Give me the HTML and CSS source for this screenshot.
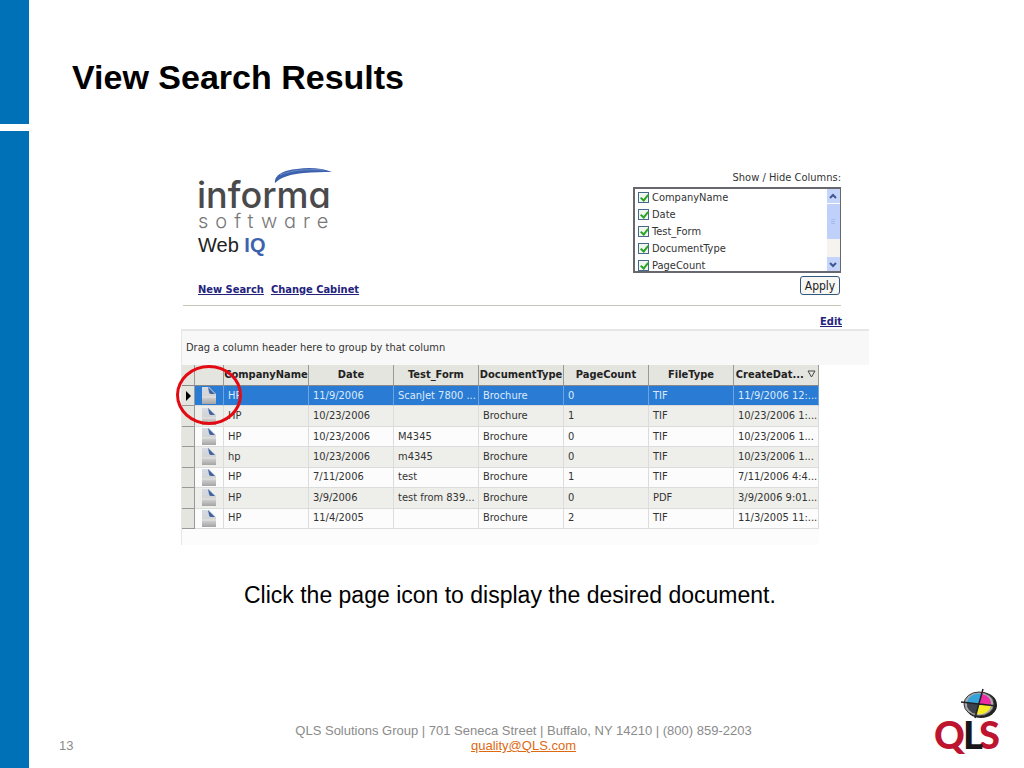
FILE: index.html
```html
<!DOCTYPE html>
<html lang="en">
<head>
<meta charset="utf-8">
<title>View Search Results</title>
<link rel="stylesheet" href="styles.css">
</head>
<body>
<svg class="defs" width="0" height="0" aria-hidden="true">
  <defs>
    <linearGradient id="paper" x1="0" y1="0" x2="0" y2="1">
      <stop offset="0" stop-color="#d5dbe4"/><stop offset=".6" stop-color="#d2d2d2"/><stop offset="1" stop-color="#a4a4a6"/>
    </linearGradient>
    <symbol id="page" viewBox="0 0 14 17">
      <path d="M0 0H7L14 7V17H0Z" fill="url(#paper)"/>
      <path d="M6 0L13 7H9Q7 7 7 5Z" fill="#41639f"/>
      <path d="M0 10H14" stroke="#e4e4e4"/>
    </symbol>
  </defs>
</svg>
<div class="slide">
  <div class="rail"><div class="rail-top"></div><div class="rail-rest"></div></div>
  <div class="content">
    <h1 class="title">View Search Results</h1>
    <main class="app">
      <div class="top">
        <div class="brand">
          <svg class="brand-logo" viewBox="0 0 150 92" role="img" aria-label="informa software Web IQ">
            <path d="M79 19C78 11 88 6 101 5C113 3 126 4 136 8C127 8 118 8 108 9C95 10 85 13 79 19Z" fill="#3d62ad"/>
            <path d="M84 11C96 6 109 5 128 6" fill="none" stroke="#6c8ac8" stroke-width="1"/>
            <text class="word-informa" x="1" y="44">informa</text>
            <text class="word-software" x="2" y="64">software</text>
            <text class="word-web" x="2" y="88">Web <tspan class="word-iq">IQ</tspan></text>
          </svg>
          <nav class="links"><a href="#">New Search</a><a href="#">Change Cabinet</a></nav>
        </div>
        <div class="columns">
          <div class="columns-label" id="cols">Show / Hide Columns:</div>
          <div class="listbox" role="group" aria-labelledby="cols">
            <div class="options">
              <label><input type="checkbox" checked>CompanyName</label>
              <label><input type="checkbox" checked>Date</label>
              <label><input type="checkbox" checked>Test_Form</label>
              <label><input type="checkbox" checked>DocumentType</label>
              <label><input type="checkbox" checked>PageCount</label>
            </div>
            <div class="scroll">
              <span class="arrow"><svg viewBox="0 0 12 14"><path d="M3 9L6 6L9 9" /></svg></span>
              <span class="thumb"><svg viewBox="0 0 12 36"><path class="grip" d="M4 16H8M4 18H8M4 20H8"/></svg></span>
              <span class="track"></span>
              <span class="arrow"><svg viewBox="0 0 12 14"><path d="M3 6L6 9L9 6"/></svg></span>
            </div>
          </div>
          <button class="apply" type="button">Apply</button>
        </div>
      </div>
      <div class="edit"><a href="#">Edit</a></div>
      <div class="group">Drag a column header here to group by that column</div>
      <div class="grid">
        <table>
          <colgroup><col class="c-mark"><col class="c-icon"><col><col><col><col><col><col><col></colgroup>
          <thead><tr><th></th><th></th><th>CompanyName</th><th>Date</th><th>Test_Form</th><th>DocumentType</th><th>PageCount</th><th>FileType</th><th>CreateDat... <svg class="sort" viewBox="0 0 9 8"><path d="M1 1H8L4.500 7Z"/></svg></th></tr></thead>
          <tbody>
            <tr class="selected"><td><svg class="marker" viewBox="0 0 5 10"><path d="M0 0L5 5L0 10Z"/></svg></td><td><svg class="page"><use href="#page"/></svg></td><td>HP</td><td>11/9/2006</td><td>ScanJet 7800 ...</td><td>Brochure</td><td>0</td><td>TIF</td><td>11/9/2006 12:...</td></tr>
            <tr><td></td><td><svg class="page"><use href="#page"/></svg></td><td>HP</td><td>10/23/2006</td><td></td><td>Brochure</td><td>1</td><td>TIF</td><td>10/23/2006 1:...</td></tr>
            <tr><td></td><td><svg class="page"><use href="#page"/></svg></td><td>HP</td><td>10/23/2006</td><td>M4345</td><td>Brochure</td><td>0</td><td>TIF</td><td>10/23/2006 1...</td></tr>
            <tr><td></td><td><svg class="page"><use href="#page"/></svg></td><td>hp</td><td>10/23/2006</td><td>m4345</td><td>Brochure</td><td>0</td><td>TIF</td><td>10/23/2006 1...</td></tr>
            <tr><td></td><td><svg class="page"><use href="#page"/></svg></td><td>HP</td><td>7/11/2006</td><td>test</td><td>Brochure</td><td>1</td><td>TIF</td><td>7/11/2006 4:4...</td></tr>
            <tr><td></td><td><svg class="page"><use href="#page"/></svg></td><td>HP</td><td>3/9/2006</td><td>test from 839...</td><td>Brochure</td><td>0</td><td>PDF</td><td>3/9/2006 9:01...</td></tr>
            <tr><td></td><td><svg class="page"><use href="#page"/></svg></td><td>HP</td><td>11/4/2005</td><td></td><td>Brochure</td><td>2</td><td>TIF</td><td>11/3/2005 11:...</td></tr>
          </tbody>
        </table>
        <div class="callout"></div>
      </div>
    </main>
    <p class="caption">Click the page icon to display the desired document.</p>
    <footer class="footer">
      <span class="number">13</span>
      <address>QLS Solutions Group | 701 Seneca Street | Buffalo, NY 14210 | (800) 859-2203<br><a href="mailto:quality@QLS.com">quality@QLS.com</a></address>
      <svg class="qls" viewBox="0 0 70 68" role="img" aria-label="QLS">
        <ellipse cx="45" cy="16" rx="16" ry="13" fill="#222"/>
        <ellipse cx="43" cy="15" rx="15" ry="12" fill="#aaa" stroke="#333"/>
        <g transform="translate(43 15)">
          <path d="M0 0L3-10A12 10 0 0 0-12-1Z" fill="#35a3dc"/>
          <path d="M0 0L3-10A12 10 0 0 1 12 1Z" fill="#ec2ba5"/>
          <path d="M0 0L12 1A12 10 0 0 1-3 10Z" fill="#f7ed25"/>
          <path d="M0 0L-3 10A12 10 0 0 1-12-1Z" fill="#3c414c"/>
          <path d="M-18-2L18 2M4-15L-4 14" stroke="#222" stroke-width="1.500"/>
        </g>
        <text class="qls-text" y="60"><tspan x="-2" class="red">Q</tspan><tspan x="43" class="red">S</tspan><tspan x="27">L</tspan></text>
      </svg>
    </footer>
  </div>
</div>
</body>
</html>
```
FILE: styles.css
```css
* { box-sizing: border-box; }
body { margin: 0; background: #fff; color: #000; font-family: "Liberation Sans", Arial, sans-serif; }
.defs { display: block; }
.slide { display: flex; min-height: 100vh; }
.rail { width: 29px; flex: none; display: flex; flex-direction: column; gap: 7px; }
.rail-top { height: 124px; background: #0071b7; }
.rail-rest { flex: 1; background: #0071b7; }
.content { flex: 1; display: flex; flex-direction: column; }
.title { margin: 57px 0 0 43px; font-size: 34px; line-height: 40px; }

.app { width: 688px; max-width: 100%; margin: 67px 0 0 152px; font-family: "DejaVu Sans Condensed", "DejaVu Sans", sans-serif; font-stretch: condensed; font-size: 11px; color: #333; }
.top { display: flex; justify-content: space-between; margin: 0 28px 0 2px; padding-left: 13px; height: 142px; border-bottom: 1px solid #c9c6ba; }
.brand { display: flex; flex-direction: column; justify-content: space-between; }
.brand-logo { width: 150px; height: 92px; overflow: visible; }
.word-informa { font: 500 36px Inter, sans-serif; font-feature-settings: "cv11"; fill: #4a4a4c; }
.word-software { font: 300 20px Inter, sans-serif; font-feature-settings: "cv11"; letter-spacing: 7px; fill: #777; }
.word-web { font: 20px "Liberation Sans", sans-serif; fill: #222; }
.word-iq { font-weight: bold; fill: #3d62ad; }
.links { display: flex; gap: 7px; padding: 0 0 7px 2px; line-height: 16px; }
.links a, .edit a { color: #23237c; font-weight: bold; }

.columns { width: 208px; display: flex; flex-direction: column; align-items: flex-end; padding-top: 6px; }
.columns-label { line-height: 16px; margin-bottom: 1px; }
.listbox { width: 100%; height: 86px; display: flex; border: 2px solid #66686e; border-right-width: 1px; overflow: hidden; }
.options { flex: 1; padding: 0 0 0 3px; }
.options label { display: flex; align-items: center; gap: 3px; height: 17px; }
.options input { appearance: none; width: 11px; height: 11px; margin: 0; border: 1px solid #45698c; background: #f2f7ee; position: relative; }
.options input::after { content: ""; position: absolute; left: 3px; top: 0; width: 3px; height: 6px; border: solid #29a329; border-width: 0 2px 2px 0; transform: rotate(40deg); }
.scroll { width: 13px; display: flex; flex-direction: column; background: #f4f3ee; }
.scroll svg { display: block; width: 12px; height: 100%; fill: none; stroke: #40598f; stroke-width: 2; }
.arrow { height: 14px; background: #c5d4fa; }
.thumb { height: 36px; background: #bfd0fa; border-top: 1px solid #fff; }
.thumb .grip { stroke: #a4b9ec; stroke-width: 1; }
.track { flex: 1; }
.apply { margin: 3px 1px 0 0; width: 40px; height: 19px; padding: 0; border: 1px solid #33587f; border-radius: 3px; background: #f7f7f4; color: #222; font: inherit; font-size: 12px; }
.edit { height: 23px; margin-right: 27px; padding-top: 8px; text-align: right; line-height: 16px; }
.group { height: 36px; padding: 10px 4px 0; border: solid #e6e6e6; border-width: 2px 0 0 1px; background: #f8f8f8; line-height: 14px; }

.grid { position: relative; width: 638px; max-width: 100%; padding-bottom: 16px; border-left: 1px solid #e6e6e6; background: #fcfcfc; }
table { width: 100%; height: 164px; table-layout: fixed; border-collapse: separate; border-spacing: 0; }
thead tr { height: 21px; }
.c-mark { width: 13px; }
.c-icon { width: 29px; }
th, td { padding: 0; overflow: hidden; white-space: nowrap; border-right: 1px solid #dcdcdc; border-bottom: 1px solid #dcdcdc; line-height: 14px; }
th { background: #e5e5e0; border-right-color: #999; border-bottom-color: #888; color: #222; font-size: 11px; }
td { padding-left: 4px; }
tbody tr { height: 20px; }
tbody tr:nth-child(even) { background: #eeeeea; }
tbody td:first-child { background: #e5e5e0; border-color: #999; }
td:nth-child(-n+2) { padding: 0; text-align: center; }
.selected { background: #2a7bd4; color: #dcebfb; }
.selected td { border-right-color: #6ca3e0; }
.marker { display: block; width: 5px; height: 10px; margin: 0 auto; fill: #000; }
.page { display: block; width: 14px; height: 17px; margin: 0 auto; }
.sort { width: 9px; height: 8px; fill: none; stroke: #444; }
.callout { position: absolute; left: -6px; top: 0; width: 66px; height: 60px; border: 3px solid #e30b13; border-radius: 50%; }

.caption { margin: 36px 0 0; padding-left: 215px; font-size: 23px; line-height: 28px; }
.footer { margin-top: auto; display: grid; grid-template-columns: 90px 1fr 96px; align-items: end; padding-bottom: 11px; color: #8b8b8b; font-size: 13px; line-height: 15px; }
.number { padding: 0 0 4px 30px; }
address { font-style: normal; text-align: center; padding-bottom: 4px; }
address a { color: #dd6a13; }
.qls { width: 70px; height: 68px; justify-self: end; margin-right: 18px; overflow: visible; }
.qls-text { font: 900 38px Lato, sans-serif; fill: #17171a; }
.qls-text .red { fill: #bd1430; }
```
